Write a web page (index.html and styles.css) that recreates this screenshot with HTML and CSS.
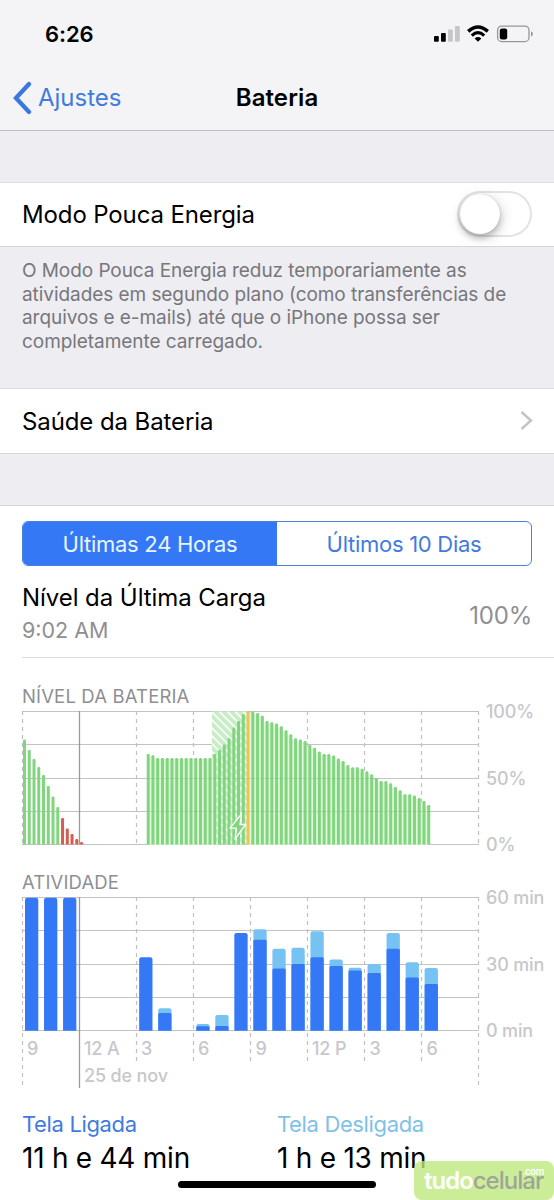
FILE: index.html
```
<!DOCTYPE html>
<html lang="pt-BR">
<head>
<meta charset="utf-8">
<title>Bateria</title>
<link rel="stylesheet" href="styles.css">
</head>
<body>
<div class="screen">
  <header class="header">
    <div class="status">
      <span class="time">6:26</span>
      <svg class="status-icons" width="100" height="20" viewBox="434 24 100 20">
        <rect x="434" y="36" width="4.8" height="5.8" rx="1"/>
        <rect x="441" y="33" width="4.8" height="8.8" rx="1"/>
        <rect x="448" y="29.5" width="4.8" height="12.3" rx="1" fill="#c6c6c8"/>
        <rect x="455" y="26" width="4.8" height="15.8" rx="1" fill="#c6c6c8"/>
        <path d="M468.2 31.400Q478 22.600 487.800 31.400" fill="none" stroke="#000" stroke-width="3.500"/>
        <path d="M471.800 35.600Q478 29.700 484.200 35.600" fill="none" stroke="#000" stroke-width="3.100"/>
        <path d="M474.600 38.500Q478 35.700 481.400 38.500L478 41.800Z"/>
        <rect x="497.600" y="26.100" width="31.400" height="15.500" rx="4.200" fill="none" stroke="#97979a" stroke-width="1.300"/>
        <rect x="499.800" y="28.400" width="7.400" height="11" rx="2.200"/>
        <path d="M531 31.300Q532.900 32 532.900 33.900T531 36.500Z" fill="#97979a"/>
      </svg>
    </div>
    <nav class="nav">
      <a class="back"><svg width="20" height="34" viewBox="0 0 20 34"><path d="M17 3L4 17L17 31" fill="none" stroke="#3a78e0" stroke-width="4.300" stroke-linecap="round" stroke-linejoin="miter"/></svg><span>Ajustes</span></a>
      <h1 class="title">Bateria</h1>
      <span></span>
    </nav>
  </header>

  <section class="row low-power">
    <span class="label label-mode">Modo Pouca Energia</span>
    <span class="toggle"><span class="knob"></span></span>
  </section>
  <p class="note">O Modo Pouca Energia reduz temporariamente as<br>atividades em segundo plano (como transferências de<br>arquivos e e-mails) até que o iPhone possa ser<br>completamente carregado.</p>
  <section class="row health">
    <span class="label label-health">Saúde da Bateria</span>
    <svg width="14" height="22" viewBox="0 0 14 22"><path d="M2.500 2L12 10.500L2.500 19" fill="none" stroke="#c4c4c8" stroke-width="2.500"/></svg>
  </section>

  <main class="panel">
    <div class="tabs">
      <span class="tab active">Últimas 24 Horas</span>
      <span class="tab">Últimos 10 Dias</span>
    </div>
    <div class="charge">
      <div class="charge-text">
        <span class="label label-charge">Nível da Última Carga</span>
        <span class="charge-time">9:02 AM</span>
      </div>
      <span class="charge-value">100%</span>
    </div>
    <h2 class="caption cap-level">NÍVEL DA BATERIA</h2>
    <div class="chart level">
      <svg id="level" class="plot" width="460" height="135" viewBox="21 710 460 135"></svg>
      <div class="scale"><span>100%</span><span>50%</span><span>0%</span></div>
    </div>
    <h2 class="caption cap-activity">ATIVIDADE</h2>
    <div class="chart activity">
      <svg id="activity" class="plot" width="460" height="193" viewBox="21 896 460 193"></svg>
      <div class="scale"><span>60 min</span><span>30 min</span><span>0 min</span></div>
    </div>
    <div class="totals">
      <div class="total on"><span>Tela Ligada</span><strong>11 h e 44 min</strong></div>
      <div class="total off"><span>Tela Desligada</span><strong>1 h e 13 min</strong></div>
    </div>
  </main>
  <div class="home"></div>
  <div class="brand"><span class="tudo">tudo</span><span class="celular">celular</span><span class="com">.com</span></div>
</div>
<script src="charts.js"></script>
</body>
</html>
```
FILE: styles.css
```
* { box-sizing: border-box; }
body { margin: 0; background: #eeedf2; font-family: Inter, "Liberation Sans", sans-serif; color: #000; }
.screen { position: relative; width: 554px; height: 1200px; overflow: hidden; background: #eeedf2; }
h1, h2, p { margin: 0; font-weight: 400; }
span { white-space: nowrap; }
svg { display: block; flex: none; }

.header { height: 131px; background: #f4f4f6; border-bottom: 1px solid #bebec3; }
.status { height: 66px; padding: 2px 20px 0 45px; display: flex; align-items: center; justify-content: space-between; }
.time { font-size: 22px; font-weight: 600; letter-spacing: -0.100px; }
.nav { height: 64px; padding: 0 12px; display: grid; grid-template-columns: 1fr auto 1fr; align-items: center; }
.back { display: flex; align-items: center; gap: 6px; color: #417bdf; font-size: 24px; }
.back span { margin-top: -2px; }
.title { font-size: 24px; font-weight: 600; letter-spacing: 0.100px; margin-top: -2px; }

.row { background: #fff; border-top: 1px solid #dddde1; border-bottom: 1px solid #d7d7da; display: flex; align-items: center; justify-content: space-between; padding: 0 22px; }
.label { font-size: 24px; line-height: 30px; letter-spacing: -0.130px; }
.low-power { margin-top: 51px; height: 65px; }
.toggle { width: 75px; height: 46px; margin-top: -2px; border: 2px solid #e3e3e4; border-radius: 23px; }
.knob { display: block; width: 40px; height: 40px; margin: 1px; border-radius: 50%; background: #fff; box-shadow: 0 4px 6px rgba(0,0,0,.22), 2px 3px 14px rgba(0,0,0,.15), 0 0 1px rgba(0,0,0,.25); }
.note { height: 141px; padding: 12px 22px 0; font-size: 19px; line-height: 23.700px; letter-spacing: -0.060px; color: #77777c; white-space: nowrap; }
.health { height: 66px; padding-right: 21px; }
.label-health { padding-top: 1px; letter-spacing: -0.100px; }

.panel { height: 695px; margin-top: 51px; background: #fff; border-top: 1px solid #d7d7da; padding: 15px 0 0 22px; }
.tabs { width: 510px; height: 45px; display: grid; grid-template-columns: 1fr 1fr; border: 1.500px solid #4b82db; border-radius: 6px; overflow: hidden; }
.tab { display: flex; align-items: center; justify-content: center; font-size: 22px; letter-spacing: -0.280px; color: #417bdf; }
.tab.active { background: #3478f6; color: #e8f4ff; }
.charge { height: 92px; padding: 7px 22px 0 0; border-bottom: 1px solid #dedee1; display: flex; align-items: center; justify-content: space-between; }
.charge-text { display: flex; flex-direction: column; }
.label-charge { letter-spacing: -0.060px; }
.charge-time { font-size: 21.500px; line-height: 34px; color: #8f8f93; }
.charge-value { font-size: 24px; letter-spacing: -0.200px; color: #8f8f93; }
.caption { font-size: 18.500px; line-height: 22px; letter-spacing: 0.150px; color: #8f8f93; }
.cap-level { margin-top: 27px; }
.chart { display: flex; margin-left: -1px; }
.level { height: 135px; margin-top: 3px; }
.cap-activity { margin-top: 26px; }
.activity { height: 193px; margin-top: 3px; }
.scale { height: 155px; margin: -9px 0 0 5px; display: flex; flex-direction: column; justify-content: space-between; font-size: 18px; line-height: 22px; font-weight: 500; letter-spacing: -0.150px; color: #c7c7cc; }
.grid { stroke: #c3c3c6; stroke-width: 1.200; }
.dash { stroke: #c0c0c3; stroke-width: 1.200; stroke-dasharray: 4 4; }
.midnight { stroke: #99999c; stroke-width: 1.300; }
.green { fill: #82d57f; }
.red { fill: #d65b50; }
.orange { fill: #f1c452; }
.gap { fill: #e0f6dd; }
.dark { fill: #3478f6; }
.light { fill: #76c3f3; }
.hour { font-size: 18px; font-weight: 500; letter-spacing: -0.150px; fill: #c7c7cc; }
.totals { display: grid; grid-template-columns: 255px 1fr; margin-top: 21px; }
.total { display: flex; flex-direction: column; }
.total span { font-size: 22px; line-height: 28px; letter-spacing: -0.360px; }
.total strong { font-size: 28px; line-height: 40px; font-weight: 400; letter-spacing: -0.250px; white-space: nowrap; }
.on span { color: #417bdf; }
.off span { color: #80c1e8; }
.home { position: absolute; left: 178px; top: 1181px; width: 198px; height: 7px; border-radius: 4px; background: #000; }
.brand { position: absolute; left: 414px; top: 1161px; width: 140px; height: 39px; border-radius: 8px; background: rgba(190,232,122,.78); padding: 0 10px; display: flex; align-items: center; font-size: 24px; line-height: 24px; letter-spacing: -1px; }
.tudo { color: #fff; font-weight: 600; }
.celular { color: #a0a59a; font-weight: 500; }
.com { position: absolute; right: 10px; top: 6px; color: #fff; font-size: 9.500px; line-height: 10px; font-weight: 600; letter-spacing: -0.300px; }
```
FILE: charts.js
```
const NS = 'http://www.w3.org/2000/svg';
function add(parent, tag, attrs, text) {
  const node = document.createElementNS(NS, tag);
  for (const key in attrs) node.setAttribute(key, attrs[key]);
  if (text) node.textContent = text;
  parent.appendChild(node);
  return node;
}
function line(svg, x1, y1, x2, y2, cls) { add(svg, 'line', { x1, y1, x2, y2, class: cls }); }
function gridY(top, i) { return Math.round(top + i * 33.3) + 0.5; }
function bar(svg, x, top, width, bottom, radius, cls) {
  add(svg, 'path', { class: cls, d: `M${x} ${bottom}V${top + radius}q0 ${-radius} ${radius} ${-radius}h${width - 2 * radius}q${radius} 0 ${radius} ${radius}V${bottom}Z` });
}
function frame(svg, top, shortEnd, longEnd) {
  for (let i = 0; i < 5; i++) line(svg, 22, gridY(top, i), 479, gridY(top, i), 'grid');
  for (let i = 0; i < 9; i++) {
    const x = 22.5 + i * 57;
    const end = i < 2 || i === 8 ? longEnd : shortEnd;
    line(svg, x, top, x, end, i === 1 ? 'midnight' : 'dash');
  }
}

const level = document.getElementById('level');
frame(level, 711, 844.4, 844.4);
const before = [739.5, 750, 759, 767, 775, 786, 796.5, 807, 818, 828.5, 834, 839, 842];
const after = [754, 755.3, 758, 758, 758, 758, 758, 758, 758, 758, 758, 758, 758, 758, 754, 750, 744.5, 738.3, 727.5, 721, 714.3, 711.5, 711.5, 713, 715.7, 721, 722.3, 723.5, 726.3, 730.3, 734.3, 738.3, 739.5, 741, 745, 747.7, 751.5, 754, 754, 755.5, 758.5, 761, 765, 767.3, 767.3, 768.7, 771.3, 774.3, 778, 781, 781, 783.3, 787, 790.3, 794.3, 794.3, 795.6, 798, 801, 805];
const defs = add(level, 'defs', {});
const hatch = add(defs, 'pattern', { id: 'hatch', width: 5.6, height: 5.6, patternUnits: 'userSpaceOnUse', patternTransform: 'rotate(-45)' });
add(hatch, 'rect', { width: 5.6, height: 5.6, fill: '#fff' });
add(hatch, 'rect', { width: 4, height: 5.6, fill: '#c8edc6' });
add(level, 'rect', { x: 212, y: 711.5, width: 36, height: 133, fill: 'url(#hatch)' });
const step = 4.755;
after.forEach((top, i) => {
  if (i < after.length - 1 && (i < 14 || i > 20)) add(level, 'rect', { x: 148.2 + i * step, y: Math.max(top, after[i + 1]) + 1, width: step, height: 843.8 - Math.max(top, after[i + 1]), class: 'gap' });
});
before.forEach((top, i) => bar(level, 23 + i * step, top, 3, 844.6, 1.2, i < 8 ? 'green' : 'red'));
after.forEach((top, i) => bar(level, 146.7 + i * step, top, 3, 844.6, 1.2, i === 21 ? 'orange' : 'green'));
for (let i = 2; i < 4; i++) add(level, 'line', { x1: 147, x2: i === 2 ? 376 : 430, y1: gridY(711, i), y2: gridY(711, i), stroke: '#7fae7c', 'stroke-opacity': 0.3, 'stroke-width': 1 });
add(level, 'path', { d: 'M241.5 814L230 828.2L236.500 828.2L235 839L245.500 824.500L240 824.500Z', fill: '#82d57f', stroke: '#fff', 'stroke-width': 1.3, 'stroke-linejoin': 'round' });

const activity = document.getElementById('activity');
frame(activity, 897, 1063, 1088);
const hours = [[0, 897.7, 897.7], [1, 897.7, 897.7], [2, 897.7, 897.7], [6, 957.3, 957.3], [7, 1008.3, 1013], [9, 1024, 1026.2], [10, 1015, 1026], [11, 933, 933], [12, 929.3, 939.7], [13, 948.7, 968.5], [14, 947.8, 964], [15, 931.2, 957.3], [16, 959.6, 966], [17, 967.8, 970.5], [18, 964, 973], [19, 933, 948.8], [20, 962.2, 977.5], [21, 968, 984]];
hours.forEach(([hour, total, screenOn]) => {
  const x = 25 + hour * 19.03;
  bar(activity, x, total, 13.3, 1030.8, 2.2, total === screenOn ? 'dark' : 'light');
  if (total !== screenOn) bar(activity, x, screenOn, 13.3, 1030.8, 1.5, 'dark');
});
[[27, '9'], [84, '12 A'], [141, '3'], [198, '6'], [255.5, '9'], [312, '12 P'], [369.5, '3'], [426.5, '6']].forEach(([x, label]) => add(activity, 'text', { x, y: 1055, class: 'hour' }, label));
add(activity, 'text', { x: 84, y: 1082, class: 'hour' }, '25 de nov');
```
